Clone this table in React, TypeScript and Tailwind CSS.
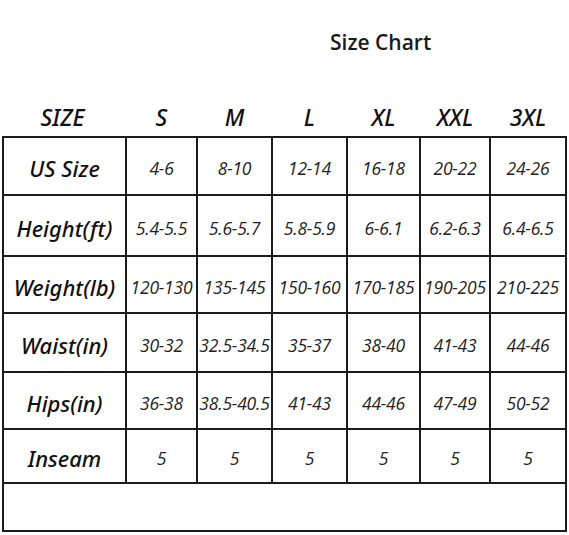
import React from "react";

const cols = ["S", "M", "L", "XL", "XXL", "3XL"];
const rows: [string, string[]][] = [
  ["US Size", ["4-6", "8-10", "12-14", "16-18", "20-22", "24-26"]],
  ["Height(ft)", ["5.4-5.5", "5.6-5.7", "5.8-5.9", "6-6.1", "6.2-6.3", "6.4-6.5"]],
  ["Weight(lb)", ["120-130", "135-145", "150-160", "170-185", "190-205", "210-225"]],
  ["Waist(in)", ["30-32", "32.5-34.5", "35-37", "38-40", "41-43", "44-46"]],
  ["Hips(in)", ["36-38", "38.5-40.5", "41-43", "44-46", "47-49", "50-52"]],
  ["Inseam", ["5", "5", "5", "5", "5", "5"]],
];
const heights = ["h-[56px]", "h-[59px]", "h-[55px]", "h-[57px]", "h-[55px]", "h-[52px]"];

export default function App() {
  return (
    <div
      className="w-[569px] h-[535px] bg-white overflow-hidden text-[#111]"
      style={{ fontFamily: '"Open Sans", "Noto Sans", sans-serif' }}
    >
      <div className="h-[98px] pt-[28px] pl-[330px]">
        <div className="text-[21px] leading-[28px] font-semibold text-[#1a1a1a]">Size Chart</div>
      </div>
      <div
        className="h-[38px] ml-[2px] w-[565px] grid grid-cols-[121px_69px_73px_73px_71px_68px_74px] gap-x-[2px] px-[2px] items-center italic font-medium text-[23px] leading-none text-[#111]"
        style={{ fontFamily: '"Noto Sans", "Open Sans", sans-serif' }}
      >
        <div className="text-center pr-[4px]">SIZE</div>
        {cols.map((c) => (
          <div key={c} className="text-center">{c}</div>
        ))}
      </div>
      <div className="ml-[2px] w-[565px] bg-[#1c1c1c] p-[2px] grid grid-cols-[121px_69px_73px_73px_71px_68px_74px] gap-[2px]">
        {rows.map(([label, vals], i) => (
          <React.Fragment key={label}>
            <div
              className={`${heights[i]} bg-white flex items-center justify-center pt-[5px] italic font-medium text-[22px] text-[#111]`}
              style={{ fontFamily: '"Noto Sans", "Open Sans", sans-serif' }}
            >
              {label}
            </div>
            {vals.map((v, j) => (
              <div key={j} className={`${heights[i]} bg-white flex items-center justify-center pt-[5px] italic text-[17.5px] text-[#222] tracking-[-0.2px] whitespace-nowrap`}>
                {v}
              </div>
            ))}
          </React.Fragment>
        ))}
        <div className="col-span-7 h-[46px] bg-white" />
      </div>
    </div>
  );
}
